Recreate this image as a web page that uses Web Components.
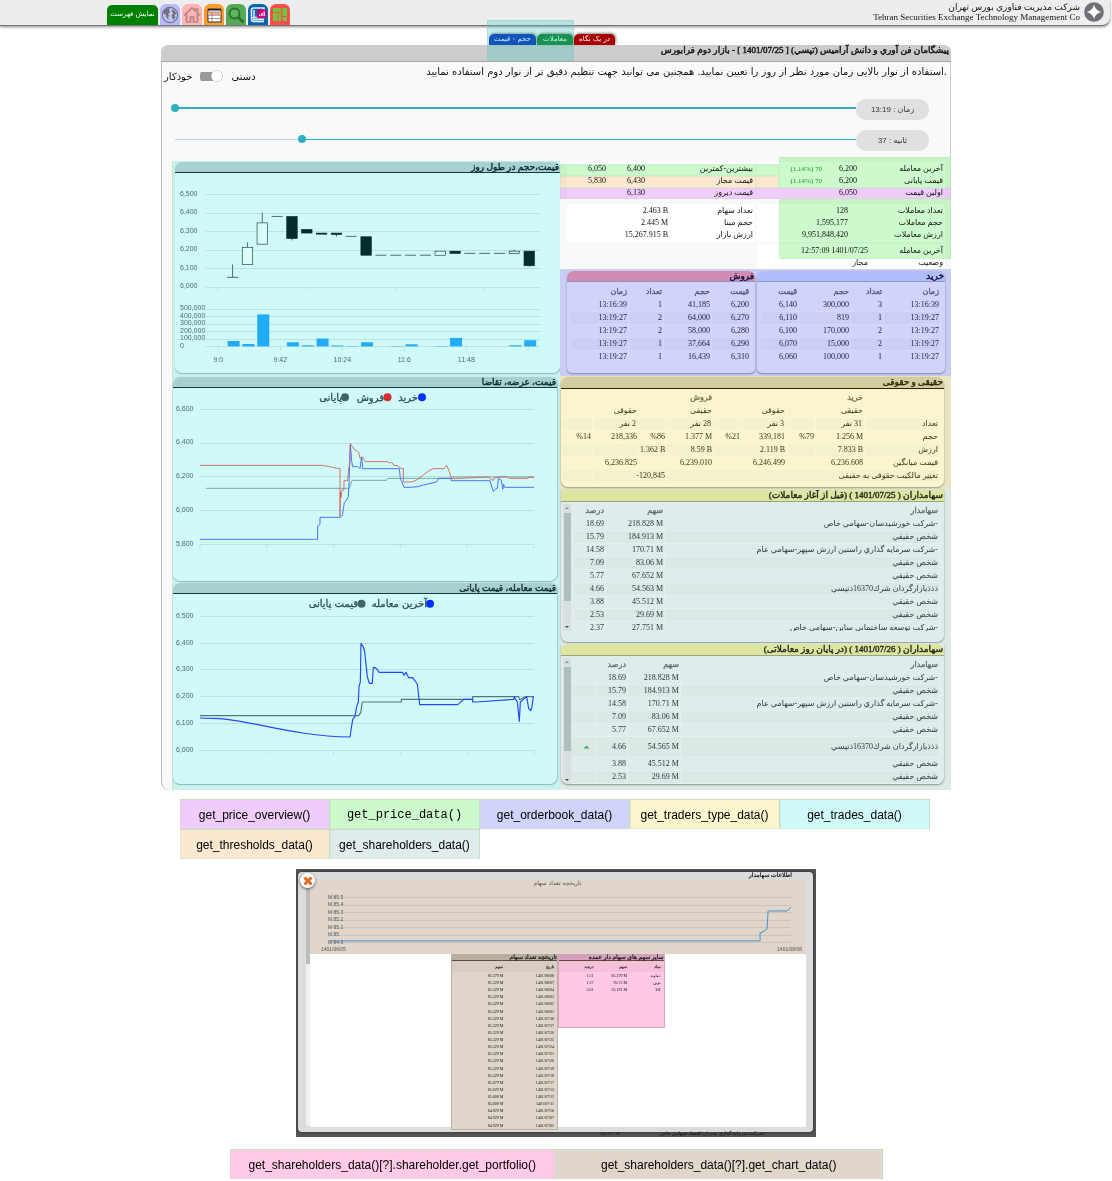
<!DOCTYPE html>
<html lang="fa">
<head>
<meta charset="utf-8">
<title>Tehran Securities Exchange Technology Management Co</title>
<style>
body{margin:0;background:#fff;color:#111;font-family:"Liberation Serif","DejaVu Sans",serif;font-size:8px}
</style>
</head>
<body>
<exchange-header></exchange-header>
<view-tabs></view-tabs>
<market-card>
  <span slot="title">پيشگامان فن آوري و دانش آراميس (تپسي) [ 1401/07/25 ] - بازار دوم فرابورس</span>
  <time-controls slot="controls"></time-controls>
  <price-volume-chart slot="charts"></price-volume-chart>
  <quote-chart slot="charts"></quote-chart>
  <trade-chart slot="charts"></trade-chart>
  <price-block slot="data"></price-block>
  <order-book slot="data"></order-book>
  <trader-types slot="data"></trader-types>
  <share-holders slot="data" period="before"></share-holders>
  <share-holders slot="data" period="after"></share-holders>
</market-card>
<function-legend>
  <function-chip color="#f0ccfa">get_price_overview()</function-chip>
  <function-chip color="#ccfacc" mono>get_price_data()</function-chip>
  <function-chip color="#d0d3fa">get_orderbook_data()</function-chip>
  <function-chip color="#faf5cc">get_traders_type_data()</function-chip>
  <function-chip color="#d0faf8">get_trades_data()</function-chip>
  <function-chip color="#fae9d0">get_thresholds_data()</function-chip>
  <function-chip color="#e0eceb">get_shareholders_data()</function-chip>
</function-legend>
<holder-dialog></holder-dialog>
<function-legend wide>
  <function-chip color="#ffcae5">get_shareholders_data()[?].shareholder.get_portfolio()</function-chip>
  <function-chip color="#e0d6cc">get_shareholders_data()[?].get_chart_data()</function-chip>
</function-legend>
<script>
const SANS='"Liberation Sans","DejaVu Sans",sans-serif';
const define=(name,render)=>customElements.define(name,class extends HTMLElement{
  connectedCallback(){
    if(this.shadowRoot)return;
    this.attachShadow({mode:'open'}).innerHTML='<style>*,:host{box-sizing:border-box}:host{display:block}</style>'+render(this);
  }
});
const TABLE_CSS=`table{border-collapse:separate;border-spacing:0;table-layout:fixed;width:100%;direction:rtl}
td,th{height:13px;line-height:12px;padding:0 2px 0 0;text-align:right;white-space:nowrap;font-size:8px;font-weight:400;border:1px solid var(--cell,transparent);border-width:0 1px 1px 0;direction:ltr}
th{-webkit-text-stroke:.3px;opacity:.72;border-color:transparent}
tbody tr:nth-child(even) td{background:var(--stripe,transparent)}
.rtl{direction:rtl}td.up{color:#1a9a1a;font-size:7px}`;
const cols=w=>{const t=w.reduce((a,b)=>a+b);return '<colgroup>'+w.map(n=>`<col style="width:${n/t*100}%">`).join('')+'</colgroup>'};
const cell=c=>typeof c==='object'?`<td colspan="${c.span||1}" class="${c.cls||''}">${c.t}</td>`:`<td class="${/نفر/.test(c)?'rtl':''}">${c}</td>`;
const rows=r=>r.map(x=>`<tr>${x.map(cell).join('')}</tr>`).join('');
const table=(w,head,body)=>`<table>${cols(w)}${head?`<thead><tr>${head.map(h=>`<th>${h}</th>`).join('')}</tr></thead>`:''}<tbody>${rows(body)}</tbody></table>`;

/* ---------- header ---------- */
define('menu-tab',el=>`<style>
:host{background:${el.getAttribute('color')};border-radius:6px 6px 0 0;height:21px;min-width:20px}
button{display:flex;align-items:center;justify-content:center;width:100%;height:100%;border:0;background:none;padding:0;color:inherit}
::slotted(svg){width:18px;height:18px;display:block}</style>
<button type="button" aria-label="${el.getAttribute('label')}"><slot></slot></button>`);

define('exchange-header',()=>`<style>
header{display:flex;justify-content:space-between;align-items:flex-end;height:26px;margin-right:2px;background:#ededed;border-bottom:1px solid #777;border-radius:0 0 8px 0;box-shadow:0 1px 3px #888;padding:0 6px 0 107px}
nav{display:flex;gap:2px;align-items:flex-end}
.list{height:20px;width:51px;border:0;border-radius:5px 5px 0 0;background:#008000;color:#fff;font:7px "DejaVu Sans",sans-serif;padding:0 0 2px;white-space:nowrap}
.brand{display:flex;gap:4px;align-items:flex-start;align-self:flex-start;text-align:right;font-size:9px;line-height:10px;padding-top:2px}
.brand p{margin:0}
.brand svg{width:20px;height:20px}
</style><header><nav>
<button class="list" type="button">نمایش فهرست</button>
<menu-tab color="#b8b8ff" label="globe"><svg viewBox="0 0 18 18"><circle cx="9" cy="9" r="7.6" fill="#c4c4f4" stroke="#70707f" stroke-width="1.2"/><path d="M3 4.500Q6 1.500 9 2.500L8 4.500 9.500 6 7 8 8.500 10 7 11 8 14 5.500 12 5 9 2.500 7.500ZM11 3l3 2 1.500 3-2 1 1 2-2 3-1.500-2.500L10.500 9l2-1.500-1.500-1.500Z" fill="#70707f"/></svg></menu-tab>
<menu-tab color="#ffb5b5" label="home"><svg viewBox="0 0 18 18"><path d="M1 9.500 9 2l3 2.800V3h2.500v4L17 9.500M3.500 8v8h4v-5h3v5h4V8" fill="none" stroke="#b88484" stroke-width="1.700"/></svg></menu-tab>
<menu-tab color="#ff9a2e" label="table"><svg viewBox="0 0 18 18"><path d="M3 3h13v13H3z" fill="#fff" stroke="#333" stroke-width="1"/><path d="M3 6h13v3H3z" fill="#ffb09a"/><path d="M3 6h13M3 9.300h13M3 12.500h13M7 6v10" stroke="#777" stroke-width=".7"/><path d="M3 3h13v1.500H3z" fill="#222"/></svg></menu-tab>
<menu-tab color="#55a855" label="search"><svg viewBox="0 0 18 18"><circle cx="7.500" cy="7.500" r="5" fill="#5cb45c" stroke="#2d702d" stroke-width="1.800"/><path d="m11 11 5.500 5.500" stroke="#2d702d" stroke-width="2.600"/></svg></menu-tab>
<menu-tab color="#0866b0" label="book"><svg viewBox="0 0 18 18"><path d="M15 15.500H4.500a2 2 0 0 1 0-4H15V2H4.500Q2.500 2 2.500 4v9.500M5 4v7M4 13.500h11" fill="none" stroke="#e6eef6" stroke-width="1.500"/><path d="M8 3.500h9.500V12H8z" fill="#cc0077"/><path d="M10 10V8.500h1.300V10zM12.300 10V7h1.300v3zM14.500 10V5.500h1.300V10z" fill="#fff"/></svg></menu-tab>
<menu-tab color="#ff4d4d" label="map"><svg viewBox="0 0 18 18"><path d="M2 2h8v4H2zM2 7h4.500v8H2zM7.500 7H10v8H7.500zM11.500 2H16v8h-4.500zM11.500 11H16v4h-4.500z" fill="#6cc83c"/></svg></menu-tab>
</nav><div class="brand"><div><p>شرکت مديريت فناوري بورس تهران</p><p>Tehran Securities Exchange Technology Management Co</p></div>
<svg viewBox="0 0 21 21"><circle cx="10.500" cy="10.500" r="10.300" fill="#6f6f76"/><path d="M10.500 3Q12 9 18 10.500 12 12 10.500 18 9 12 3 10.500 9 9 10.500 3Z" fill="#fff"/></svg></div></header>`);

/* ---------- tabs over the card ---------- */
define('view-tabs',()=>`<style>
:host{max-width:790px;margin:0 auto;padding-top:8px;position:relative}
nav{display:flex;justify-content:center;gap:1px;padding:0 8px 0 0}
button{height:11px;border:0;border-radius:5px 5px 0 0;color:#fff;font:7px/11px "DejaVu Sans",sans-serif;padding:0;box-shadow:1px -1px 3px #888;white-space:nowrap}
.mark{position:absolute;z-index:2;left:326px;top:-6px;width:87px;height:41px;background:#40c8c04d;border:1px solid #90d0a070}
</style><nav><button type="button" style="background:#0022bb;width:47px">حجم - قیمت</button><button type="button" style="background:#087a22;width:36px">معاملات</button><button type="button" style="background:#a80000;width:41px">در یک نگاه</button></nav><div class="mark"></div>`);

define('market-card',()=>`<style>
:host{max-width:790px;margin:0 auto;background:#f9f9f9;border-radius:8px;box-shadow:inset 1px 0 #bbb,inset -1px 0 #ccc}
h1{margin:0;height:17px;background:#ccc;border-bottom:1px solid #aaa;border-radius:7px 7px 0 0;font-size:9px;line-height:11px;font-weight:400;-webkit-text-stroke:.4px;text-align:right;direction:rtl;padding-right:2px}
.grid{display:grid;grid-template-columns:388fr 391fr;padding-left:11px}
.charts{margin-top:4px;background:#c8f2ee;padding:1px 0 6px;border-left:1px solid #c4e8cc}
.data{background:#dde9e4}
</style><h1><slot name="title"></slot></h1><slot name="controls"></slot><div class="grid"><div class="charts"><slot name="charts"></slot></div><div class="data"><slot name="data"></slot></div></div>`);

define('time-slider',el=>{const f=el.getAttribute('value');const w=el.getAttribute('thick');return `<style>
:host{display:flex;align-items:center;height:21px}
input{appearance:none;-webkit-appearance:none;direction:rtl;flex:1;min-width:0;height:10px;margin:0 0 3px;background:linear-gradient(to left,#2fb0c0 ${f}%,#a9dce2 ${f}%) center/calc(100% - 8px) ${w}px no-repeat}
input::-webkit-slider-thumb{-webkit-appearance:none;width:8px;height:8px;border-radius:50%;background:#2fb0c0;border:0}
label{width:73px;height:21px;border-radius:10px;background:#e0e0e0;text-align:center;font:8px/21px ${SANS};direction:rtl;color:#333;margin-left:-4px}
</style><input id="s" type="range" min="0" max="100" step="any" value="${f}"><label for="s"><slot></slot></label>`});

define('time-controls',()=>`<style>
:host{display:flex;flex-direction:column;gap:10px;height:95px;font:10px "DejaVu Sans",sans-serif}
.top{display:flex;justify-content:space-between;height:27px;padding:0 4px 0 3px}
.top p{margin:0;padding-top:4px;line-height:12px}
.switch{display:flex;gap:8px;align-items:center;padding-top:2px}
input{appearance:none;width:23px;height:13px;margin:0;background:radial-gradient(circle at 17px 6px,#fff 5px,#bbb 6px,transparent 6px),linear-gradient(#999,#999) 0 2px/18px 9px no-repeat;border-radius:5px}
time-slider{margin:0 22px 0 10px}
</style><div class="top"><div class="switch"><span>خودکار</span><input id="mode" type="checkbox" role="switch" checked><label for="mode">دستی</label></div><p>استفاده از نوار بالایی زمان مورد نظر از روز را تعیین نمایید. همچنین می توانید جهت تنظیم دقیق تر از نوار دوم استفاده نمایید.</p></div>
<time-slider value="100" thick="2">زمان : 13:19</time-slider><time-slider value="81.4" thick="1">ثانیه : 37</time-slider>`);

/* ---------- charts ---------- */
const CHART_CSS=(ml,mr,mb)=>`<style>:host{margin:0 ${mr}px ${mb}px ${ml}px;background:#d0faf8;border-radius:7px;box-shadow:0 1px 1px #8db8b6,1px 0 1px #a0c8c6;overflow:hidden}
h2{margin:0;height:11px;background:#a8d0d0;border-bottom:1px solid #123c3c;font-size:9px;line-height:10px;font-weight:400;-webkit-text-stroke:.4px;text-align:right;direction:rtl;color:#0c2c2c;padding-right:1px}
svg{display:block;width:100%;height:auto;direction:ltr}text{font:7px ${SANS};fill:#4c6c6c}
.leg{font:10px "DejaVu Sans",sans-serif;text-anchor:end;fill:#2c5050;stroke:#2c5050;stroke-width:.3px}</style>`;
const line=(x1,y1,x2,y2,c='#b9e2e0')=>`<path d="M${x1} ${y1}L${x2} ${y2}" stroke="${c}" fill="none"/>`;

define('price-volume-chart',()=>{
  let s='';const Y=v=>20.3+(6500-v)*.1846,V=v=>172.4-v*.0753,X=i=>57.6+14.83*i;
  for(let v=6500;v>=6000;v-=100)s+=line(31,Math.round(Y(v))+.5,365,Math.round(Y(v))+.5)+`<text x="5" y="${Y(v)+1.5}">${v.toLocaleString('en')}</text>`;
  for(let k=0;k<4;k++)s+=line(42.7+88.9*k,113,42.7+88.9*k,116);
  for(let v=500;v>=0;v-=100)s+=line(31,Math.round(V(v))+.5,365,Math.round(V(v))+.5)+`<text x="5" y="${V(v)+1.3}">${v?v+',000':'0'}</text>`;
  ['9:0','9:42','10:24','11:6','11:48',''].forEach((t,k)=>s+=line(43.3+62*k,173,43.3+62*k,177)+`<text x="${43.3+62*k}" y="188" text-anchor="middle">${t}</text>`);
  [[6050,6050,6050,6120],[6120,6213,6120,6240],[6230,6345,6230,6400],[6380,6380],[6380,6260,6250,6380],[6310,6290],[6290,6284],[6290,6282,6270,6290],[6272,6272],[6270,6170],[6170,6170],[6170,6170],[6170,6170],[6170,6170],[6170,6192],[6192,6180],[6180,6180],[6180,6180],[6180,6180],[6180,6192,6180,6200],[6192,6113,6108,6192]].forEach(([o,c,l,h],i)=>{
    const a=Y(Math.max(o,c)),b=Y(Math.min(o,c));
    if(h)s+=line(X(i),Y(h),X(i),a,'#47706f')+line(X(i),b,X(i),Y(l),'#47706f');
    s+=o===c?line(X(i)-5.5,a,X(i)+5.5,a,'#47706f'):`<rect x="${X(i)-5.2}" y="${a}" width="10.500" height="${b-a}" fill="${c>o?'#d9fbf9':'#062c2c'}" stroke="#062c2c" stroke-width=".6"/>`;});
  [72,32,425,0,55,15,105,12,5,55,0,5,28,0,5,112,0,0,0,15,82].forEach((v,i)=>{if(v)s+=`<rect x="${X(i)-5}" y="${V(v)}" width="12" height="${v*.0753}" fill="#22acf8"/>`});
  return CHART_CSS(2,0,4)+`<h2>قیمت،حجم در طول روز</h2><svg viewBox="0 -1 385 200">${s}</svg>`;
});
const axes=(top,bottom,max,step,n)=>{let s='';for(let i=0;i<=n;i++){const y=top+(bottom-top)*i/n;s+=line(27,Math.round(y-.5)+.5,361,Math.round(y-.5)+.5)+`<text x="3" y="${y+1.4}">${(max-step*i).toLocaleString('en')}</text>`}
  for(let k=0;k<6;k++)s+=line(27+66.8*k,bottom,27+66.8*k,bottom+4);return s};
define('quote-chart',()=>CHART_CSS(0,3,2)+`<h2>قیمت، عرضه، تقاضا</h2><svg viewBox="0 0 384 193">${axes(21.3,156.3,6600,200,4)}
<circle cx="249" cy="9.300" r="4" fill="#0030ff"/><text class="leg" x="245" y="12.500">خرید</text><circle cx="214.500" cy="9.300" r="4" fill="#d62c2c"/><text class="leg" x="211" y="12.500">فروش</text><circle cx="172" cy="9.300" r="4" fill="#3d6666"/><text class="leg" x="169" y="12.500">پایانی</text>
<g transform="scale(.33333) translate(-39 -39)" fill="none" stroke-width="2.500" stroke-linejoin="round">
<path stroke="#6c9492" d="M138 340H568L576 316H680L684 310H875V306H1122"/>
<path stroke="#2c5cf8" d="M120 493H473V452L480 448V427H541L547 422 553 383 560 375 565 365 567 330 571 210 575 258 578 275H594L600 281 605 245 608 281H718L721 310 732 337H755Q775 336 790 330L830 321 836 310H873V317H990L1000 350 1005 343 1012 340 1015 310 1024 316 1028 343 1031 328 1034 337H1122"/>
<path stroke="#d25854" d="M120 271H485L510 275 530 280H540V425L541 350 543 368 546 345H552V317H563L566 280 569 270 571 206 582 222 596 232 600 250 608 247 616 260H683L690 264 695 262 702 271 713 272 722 280H730V321H752Q765 321 790 300T825 281H852L860 271 866 285 875 311 905 310 985 306 992 313 1000 316 1003 309 1015 306 1040 305 1045 310H1103L1107 307H1122"/></g></svg>`);
define('trade-chart',()=>CHART_CSS(0,3,0)+`<h2>قیمت معامله، قیمت پایانی</h2><svg viewBox="0 0 384 190">${axes(22.3,156.3,6500,100,5)}
<circle cx="257" cy="9.700" r="4" fill="#0030ff"/><text class="leg" x="254" y="13">آخرین معامله</text><circle cx="188.500" cy="9.700" r="4" fill="#3d6666"/><text class="leg" x="185" y="13">قیمت پایانی</text>
<g transform="scale(.33333) translate(-39 -42)" fill="none" stroke-width="3.500" stroke-linejoin="round">
<path stroke="#527876" d="M120 407H596L602 398 607 366H724V358H938V350H1076L1079 359 1095 350H1122"/>
<path stroke="#2448f8" d="M120 414C160 416 170 414 200 418C300 430 420 470 570 471L578 418 585 410 590 380 595 366 597 320 601 306 603 190Q612 200 614 215L622 290 628 310H637L640 262Q650 262 657 277H728L732 286 738 277 746 293H758L772 312 779 374H893L912 358H938V366H950L1062 358V350L1072 366 1078 424 1081 366 1100 350 1106 385 1112 392 1116 380 1120 350"/></g></svg>`);

/* ---------- price tables ---------- */
define('price-block',()=>{const g=(w,b)=>`<div class="box">${table(w,null,b)}</div>`;const up={t:'(1.14%) 70',cls:'up'};return `<style>${TABLE_CSS}
:host{position:relative;background:#f9f9f9}
.grid{display:grid;grid-template-columns:1fr 1fr;gap:4px 2px;height:112px;padding:5px 6px 0 7px;align-content:start}
.box{background:#fff;border-radius:3px;height:38px;padding-top:1px}td{height:12px;border:0}
.last{grid-column:2;height:25px;margin-top:-2px}
.mark{position:absolute;mix-blend-mode:multiply;box-shadow:inset 0 0 0 1px #b4dcae40}
</style><div class="grid">
${g([108,39,41],[['بیشترین-کمترین','6,400','6,050'],['قیمت مجاز','6,430','5,830'],['قیمت دیروز','6,130','']])}
${g([86,35,67],[['آخرین معامله','6,200',up],['قیمت پایانی','6,200',up],['اولین قیمت','6,050','']])}
${g([85,103],[['تعداد سهام','2.463 B'],['حجم مبنا','2.445 M'],['ارزش بازار','15,267.915 B']])}
${g([95,93],[['تعداد معاملات','128'],['حجم معاملات','1,595,177'],['ارزش معاملات','9,951,848,420']])}
<div class="box last">${table([75,113],null,[['آخرین معامله','12:57:09 1401/07/25'],['وضعیت','مجاز']])}</div></div>
<div class="mark" style="background:#ccfacc;left:0;width:56%;top:7px;height:12px"></div>
<div class="mark" style="background:#fae9d0;left:0;width:56%;top:19px;height:12px"></div>
<div class="mark" style="background:#f0ccfa;left:0;right:0;top:31px;height:11px"></div>
<div class="mark" style="background:#ccfacc;left:56%;right:0;top:0;height:31px"></div>
<div class="mark" style="background:#ccfacc;left:56%;right:0;top:42px;height:60px"></div>`});

const CARD_CSS=`h2{margin:0;height:12px;font-size:9px;line-height:11px;font-weight:400;-webkit-text-stroke:.4px;text-align:right;direction:rtl;padding-right:1px;white-space:nowrap}`;
define('order-book',()=>`<style>${TABLE_CSS}${CARD_CSS}
:host{--cell:#d6d8fb;--stripe:#cccff5;background:#caccf4;padding:1px 6px 3px 7px;color:#22224a;border-top:1px solid #c4d8dc}
.grid{display:grid;grid-template-columns:1fr 1fr;gap:2px}section{background:#d0d3fa;height:102px;border-radius:7px 7px 5px 5px;box-shadow:0 1px 2px #8080a8;overflow:hidden}
h2{height:11px;color:#101038;border-bottom:1px solid #9094c0}.t{padding:4px 4px 0}</style><div class="grid">
<section><h2 style="background:#d08cb4">فروش</h2><div class="t">${table([39,48,35,58],['قیمت','حجم','تعداد','زمان'],[['6,200','41,185','1','13:16:39'],['6,270','64,000','2','13:19:27'],['6,280','58,000','2','13:19:27'],['6,290','37,664','1','13:19:27'],['6,310','16,439','1','13:19:27']])}</div></section>
<section><h2 style="background:#b0bdfa">خرید</h2><div class="t">${table([57,33,52,38],['زمان','تعداد','حجم','قیمت'],[['13:16:39','3','300,000','6,140'],['13:19:27','1','819','6,110'],['13:19:27','2','170,000','6,100'],['13:19:27','2','15,000','6,070'],['13:19:27','1','100,000','6,060']])}</div></section></div>`);

define('trader-types',()=>`<style>${TABLE_CSS}${CARD_CSS}
:host{--cell:#faf7d6;--stripe:#f5f1cc;background:#e8e6c2;padding:1px 7px 2px 1px;color:#3a3818}
section{background:#faf5cc;height:110px;border-radius:7px;box-shadow:0 1px 2px #99956c;overflow:hidden}
h2{background:#d2cc9e;border-bottom:1px solid #2a2800;height:12px;color:#2a2808}.t{padding:3px 4px 0 2px}</style>
<section><h2>حقیقی و حقوقی</h2><div class="t">${table([75,49,29,45,28,47,28,46,30],['','خرید','','','','فروش','','',''],[
['','حقیقی','','حقوقی','','حقیقی','','حقوقی',''],
['تعداد','31 نفر','','3 نفر','','28 نفر','','2 نفر',''],
['حجم','1.256 M','%79','339,181','%21','1.377 M','%86','218,336','%14'],
['ارزش','7.833 B','','2.119 B','','8.59 B','1.362 B','',''],
['قیمت میانگین','6,236.608','','6,246.499','','6,239.010','','6,236.825',''],
[{t:'تغییر مالکیت حقوقی به حقیقی',span:6},{t:'-120,845',span:2},'']])}</div></section>`);

define('share-holders',el=>{const after=el.getAttribute('period')==='after';
const n=['شرکت خورشيدسان-سهامي خاص-','شخص حقيقي','شرکت سرمايه گذاري راستين ارزش سپهر-سهامي عام-','شخص حقيقي','شخص حقيقي','ذذذبازارگردان شرك16370ذتپسي','شخص حقيقي','شخص حقيقي'];
if(!after)n.push('شرکت توسعه ساختماني ساين-سهامي خاص-');
const q=['218.828 M','184.913 M','170.71 M','83.06 M','67.652 M',after?'54.565 M':'54.563 M','45.512 M','29.69 M','27.751 M'],p=['18.69','15.79','14.58','7.09','5.77','4.66','3.88','2.53','2.37'];
const body=n.map((x,i)=>after?[x,q[i],p[i],i===5?{t:'<svg viewBox="0 0 6 4"><path d="M0 3.500 3 .500l3 3z" fill="#3cab4c"/></svg>',cls:'tall'}:'']:[x,q[i],p[i]]);
return `<style>${TABLE_CSS}${CARD_CSS}
:host{--cell:#e5efee;--stripe:#dce8e6;background:#dce9e5;padding:1px 7px ${after?6:1}px 1px;color:#2c3838}
section{background:#e0eceb;height:${after?140:152}px;border-radius:0 0 7px 7px;box-shadow:0 1px 2px #849490;overflow:hidden}
h2{background:#dde5a0;border-bottom:1px solid #9aa384;color:#222a20;border-radius:${after?'7px 7px 0 0':'0'}}
.t{display:flex;gap:${after?0:4}px;padding:2px 4px 0 2px;height:${after?128:129}px;overflow:hidden;align-items:flex-start}
.t table{margin-top:1px}
.bar{flex:none;width:8px;height:${after?126:127}px;background:#d6e0de;display:flex;flex-direction:column;align-items:center;padding:3px 0;overflow:hidden}
.bar i{width:7px;background:#b2bebc;height:${after?84:88}px;margin:4px 0 auto}
.a{border:2px solid transparent;border-bottom-color:#889;margin-top:-2px}.b{border:2px solid transparent;border-top-color:#444;margin-bottom:-2px}
td.tall{height:21px;padding-right:7px}.tall svg{width:7px;height:4px;vertical-align:middle}</style>
<section><h2>${after?'سهامداران ( 1401/07/26 ) (در پایان روز معاملاتی)':'سهامداران ( 1401/07/25 ) (قبل از آغاز معاملات)'}</h2><div class="t"><div class="bar"><b class="a"></b><i></i><b class="b"></b></div>
${after?table([259,53,31,26],['سهامدار','سهم','درصد',''],body):table([275,59,31],['سهامدار','سهم','درصد'],body)}</div></section>`});

/* ---------- legends ---------- */
define('function-chip',el=>`<style>:host{background:${el.getAttribute('color')};border:1px solid #c8dcc2;border-width:1px 1px 0 0;height:30px;display:flex;align-items:center;justify-content:center;color:#000;font:12px ${el.hasAttribute('mono')?'"Liberation Mono",monospace':SANS};white-space:nowrap;box-shadow:inset 1px -1px #c8dcc260}</style><slot></slot>`);
define('function-legend',el=>{const wide=el.hasAttribute('wide');return `<style>:host{display:grid;grid-template-columns:repeat(${wide?2:5},1fr);max-width:${wide?653:752}px;margin:${wide?12:9}px auto 0;padding-right:${wide?0:2}px}</style><slot></slot>`});

/* ---------- shareholder dialog ---------- */
define('holder-dialog',()=>{
const d=['08/08','08/07','08/04','08/03','08/02','08/01','07/30','07/27','07/26','07/25','07/24','07/21','07/20','07/19','07/18','07/17','07/13','07/12','07/11','07/10','07/07','07/05'];
const v=d.map((x,i)=>i<1?'85.379 M':i<15?'85.329 M':i<16?'85.079 M':i<17?'85.029 M':i<19?'85.008 M':'84.929 M');
let g='';['85.5','85.4','85.3','85.2','85.1','85','84.9'].forEach((t,i)=>g+=line(20,Math.round(18+7.5*i)+.5,482,Math.round(18+7.5*i)+.5,'#cbc2ba')+`<text x="18" y="${20+7.5*i}">M ${t}</text>`);
return `<style>${TABLE_CSS}
:host{max-width:520px;margin:10px auto 0;background:#555;height:268px;padding:3px 3px 4px 2px;position:relative;left:0;overflow:hidden;font-size:4px}
.panel{background:#dcdcdc;height:260px;border-radius:4px;box-shadow:0 0 3px #222;padding:0 7px 0 12px}
h2,h3{margin:0;direction:rtl;text-align:right;font-weight:400;-webkit-text-stroke:.2px}h2{font-size:6px;line-height:6px;height:7px;padding-right:14px}
.body{background:linear-gradient(#fff,#fff) 0 0/100% 248px no-repeat;height:251px;overflow:hidden}
figure{margin:0;background:#e0d6cc}svg.c{display:block;width:100%;height:auto}text{font:5px ${SANS};fill:#555}
.two{display:grid;grid-template-columns:142fr 107fr 107fr 142fr}
.two>div:first-child{grid-column:2;height:176px;background:#dfd5ca;border:1px solid #b9b4a0;border-top:0}
.two>div:last-child{height:74px;background:#ffc8e4;border:1px solid #d8a4c0;border-top:0}
h3{font-size:6px;line-height:6px;height:7px;border-bottom:1px solid #5c4c48;background:#b8ae9f;white-space:nowrap}
.two>div:last-child h3{background:#d4a0bc}
td,th{font-size:4px;line-height:5px;height:7px;border:0;padding-right:3px}thead th{height:11px;background:#0000000d}
.long table{height:168px}
.close{position:absolute;left:4px;top:4px;width:15px;height:15px;border:0;border-radius:50%;background:#fff;box-shadow:0 1px 3px #555;padding:0;display:flex;align-items:center;justify-content:center}
.sb{position:absolute;left:10px;top:17px;width:4px;height:240px;background:linear-gradient(#bbb,#bbb) top/4px 78px no-repeat #f0f0f0}
.under{display:flex;justify-content:flex-end;gap:40px;padding-right:48px;font-size:5px;line-height:4px;color:#111}</style>
<div class="panel"><h2>اطلاعات سهامدار</h2><div class="body"><figure><svg class="c" viewBox="0 0 497 75"><text x="248" y="6" text-anchor="middle" style="font:6px 'DejaVu Sans'">تاریخچه تعداد سهام</text>${g}
<path d="M20 62H451V54L454 53 458 50 459 32H478L482 28" fill="none" stroke="#4494d0"/><text x="11" y="72">1401/06/05</text><text x="493" y="72" text-anchor="end">1401/08/08</text></svg></figure>
<div class="two"><div class="long"><h3>تاریخچه تعداد سهام</h3>${table([52,55],['تاریخ','سهم'],d.map((x,i)=>['1401/'+x,v[i]]))}</div>
<div><h3>سایر سهم های سهام دار عمده</h3>${table([34,34,38],['نماد','سهم','درصد'],[['دماوند','85.379 M','1.51'],['نوین','93.73 M','1.37'],['کالا','63.191 M','3.01']])}</div></div></div></div>
<div class="sb"></div><button class="close" type="button" aria-label="close"><svg width="10" height="10" viewBox="0 0 10 10"><path d="m1.500 1.500 7 7m0-7-7 7" stroke="#e8691c" stroke-width="3"/></svg></button>
<div class="under"><span>94.787 M</span><span>شرکت سرمايه گذاري مديران اقتصاد-سهامي خاص-</span></div>`});
</script>
</body>
</html>
